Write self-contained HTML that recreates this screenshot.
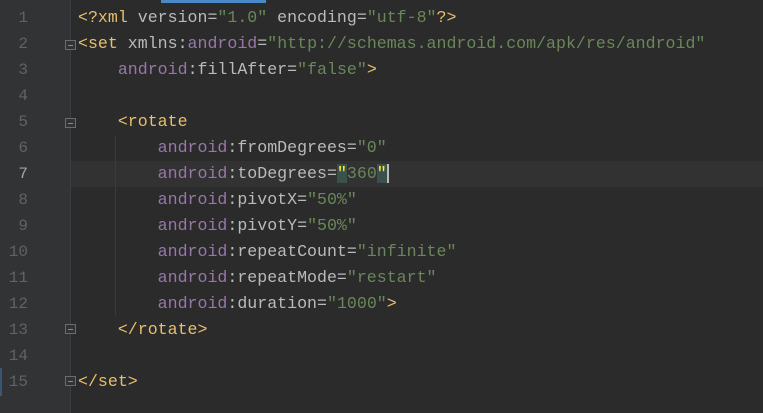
<!DOCTYPE html>
<html><head><style>
body{margin:0;width:763px;height:413px;background:#2b2b2b;overflow:hidden;position:relative;font-family:"Liberation Mono",monospace;font-size:16.6px}
.g{position:absolute;left:0;top:0;width:70px;height:413px;background:#313335}
.sep{position:absolute;left:70px;top:0;width:1px;height:413px;background:#3c3f41}
.ln{position:absolute;left:0;width:28px;text-align:right;color:#606366;font-size:16px;line-height:26px}
.c{position:absolute;left:78px;white-space:pre;line-height:26px;color:#bababa}
.t{color:#e8bf6a}.n{color:#9876aa}.s{color:#6a8759}
.f{position:absolute;left:65px;width:11px;height:10px;border:1px solid #6a6d70;box-sizing:border-box;background:#313335}
.f:after{content:"";position:absolute;left:2px;top:4px;width:5px;height:1px;background:#8a8d90}
</style></head><body>
<div class="g"></div><div class="sep"></div>
<div style="position:absolute;left:71px;top:161px;width:692px;height:26px;background:#323232"></div>
<div style="position:absolute;left:161px;top:0;width:105px;height:3px;background:#4a88c7"></div>
<div style="position:absolute;left:115px;top:136px;width:1px;height:180px;background:#3b3b3b"></div>
<div style="position:absolute;left:0;top:368px;width:2px;height:28px;background:#3a5670"></div>
<div class="ln" style="top:5px">1</div>
<div class="ln" style="top:31px">2</div>
<div class="ln" style="top:57px">3</div>
<div class="ln" style="top:83px">4</div>
<div class="ln" style="top:109px">5</div>
<div class="ln" style="top:135px">6</div>
<div class="ln" style="top:161px;color:#a4a3a3">7</div>
<div class="ln" style="top:187px">8</div>
<div class="ln" style="top:213px">9</div>
<div class="ln" style="top:239px">10</div>
<div class="ln" style="top:265px">11</div>
<div class="ln" style="top:291px">12</div>
<div class="ln" style="top:317px">13</div>
<div class="ln" style="top:343px">14</div>
<div class="ln" style="top:369px">15</div>
<div class="f" style="top:40px"></div>
<div class="f" style="top:118px"></div>
<div class="f" style="top:324px"></div>
<div class="f" style="top:376px"></div>
<div class="c" style="top:5px"><span class="t">&lt;?xml </span>version=<span class="s">"1.0"</span> encoding=<span class="s">"utf-8"</span><span class="t">?&gt;</span></div>
<div class="c" style="top:31px"><span class="t">&lt;set </span>xmlns:<span class="n">android</span>=<span class="s">"http://schemas.android.com/apk/res/android"</span></div>
<div class="c" style="top:57px">    <span class="n">android</span>:fillAfter=<span class="s">"false"</span><span class="t">&gt;</span></div>
<div class="c" style="top:109px">    <span class="t">&lt;rotate</span></div>
<div class="c" style="top:135px">        <span class="n">android</span>:fromDegrees=<span class="s">"0"</span></div>
<div class="c" style="top:161px">        <span class="n">android</span>:toDegrees=<span class="s"><span style="background:#3b514d;color:#ffef28">"</span>360<span style="background:#3b514d;color:#ffef28">"</span></span><span style="border-left:2px solid #bbb"></span></div>
<div class="c" style="top:187px">        <span class="n">android</span>:pivotX=<span class="s">"50%"</span></div>
<div class="c" style="top:213px">        <span class="n">android</span>:pivotY=<span class="s">"50%"</span></div>
<div class="c" style="top:239px">        <span class="n">android</span>:repeatCount=<span class="s">"infinite"</span></div>
<div class="c" style="top:265px">        <span class="n">android</span>:repeatMode=<span class="s">"restart"</span></div>
<div class="c" style="top:291px">        <span class="n">android</span>:duration=<span class="s">"1000"</span><span class="t">&gt;</span></div>
<div class="c" style="top:317px">    <span class="t">&lt;/rotate&gt;</span></div>
<div class="c" style="top:369px"><span class="t">&lt;/set&gt;</span></div>
</body></html>
